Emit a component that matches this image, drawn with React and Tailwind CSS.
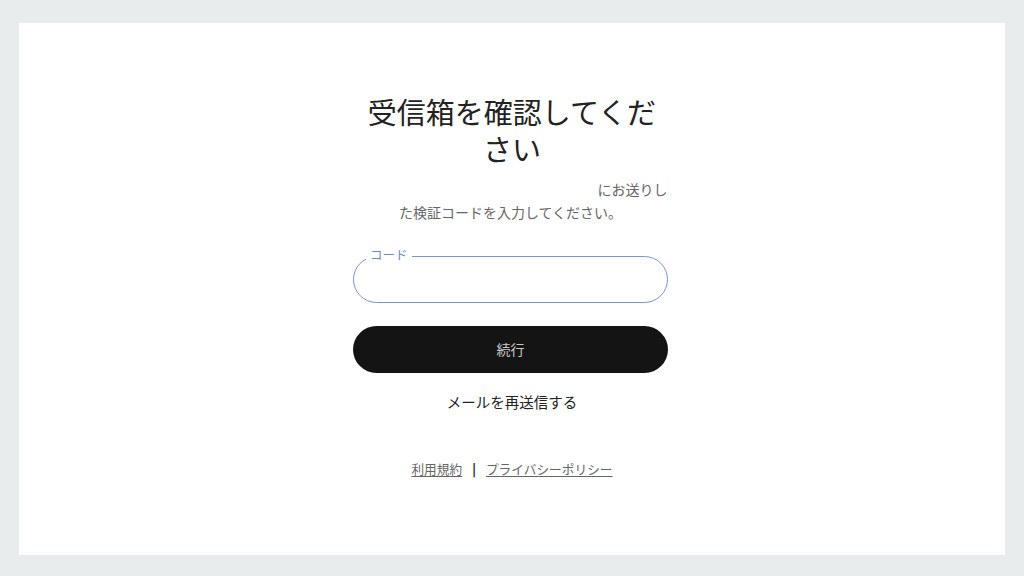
export default function App() {
  const jp = { fontFamily: '"Noto Sans CJK JP", "Noto Sans", sans-serif' };
  return (
    <div className="w-[1024px] h-[576px] bg-[#e8ecec] pt-[23px] pl-[19px]" style={jp}>
      <div className="w-[986px] h-[532px] bg-white flex flex-col items-center pt-[70px]">
        <h1 className="w-[294px] text-center text-[29px] leading-[37px] text-[#222] font-normal">
          受信箱を確認してください
        </h1>
        <p className="mt-[11px] w-[315px] mr-[3px] text-center text-[14px] leading-[23px] text-[#666]">
          <span className="inline-block w-[244px]"></span>にお送りした検証コードを入力してください。
        </p>
        <div className="relative mt-[32px] w-[315px] h-[47px] mr-[3px] rounded-full border border-[#7b93d8]">
          <span className="absolute left-[12px] -top-[10px] px-[4px] bg-white text-[12.5px] leading-[16px] text-[#6f86cf]">
            コード
          </span>
        </div>
        <button className="mt-[23px] w-[315px] h-[47px] mr-[3px] rounded-full bg-[#141414] text-[#c8c8c8] text-[14px]">
          続行
        </button>
        <div className="mt-[19px] text-[14.5px] leading-[20px] text-[#222]">メールを再送信する</div>
        <div className="mt-[47px] flex items-center text-[12.7px] leading-[20px] text-[#666]">
          <span className="underline underline-offset-2">利用規約</span>
          <span className="mx-[10px] text-[#222] font-bold">|</span>
          <span className="underline underline-offset-2">プライバシーポリシー</span>
        </div>
      </div>
    </div>
  );
}
